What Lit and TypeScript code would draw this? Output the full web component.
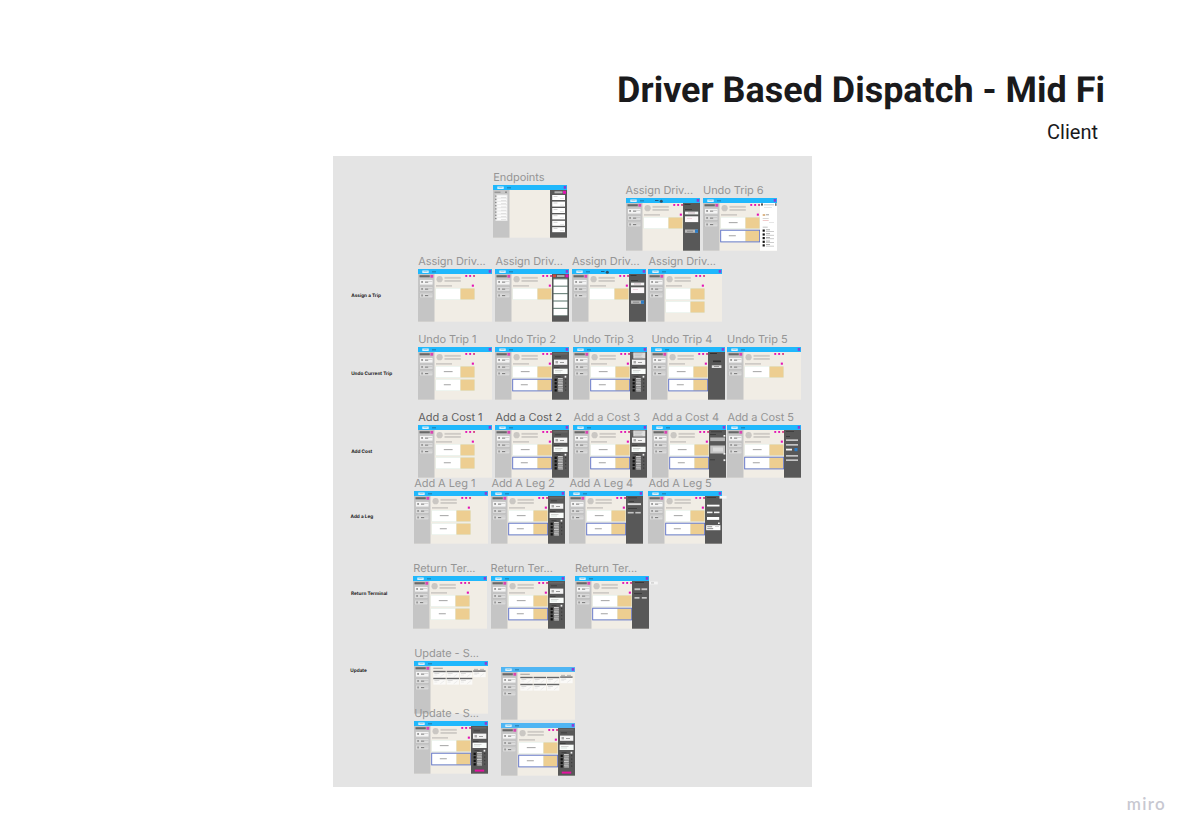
import { LitElement, html, svg, css, nothing } from 'lit';
import { customElement, property } from 'lit/decorators.js';
import { styleMap } from 'lit/directives/style-map.js';

type Box = [x: number, y: number, w: number, h: number, fill: string];

interface Frame {
  title?: string;
  x: number;
  y: number;
  cards?: number;
  selected?: boolean;
  labels?: boolean;
  panel?: string;
  bold?: boolean;
  kind?: string;
  nav?: string;
}

const DARK = '#585858';
const LIGHT = '#f4f4f4';
const GREY = '#c4c4c4';
const PINK = '#e412b5';
const BLUE = '#2e7cc4';

// driver card, trip card and the list of stops
const TRIP: Box[] = [
  [58.5, 6.5, 14, 0.8, '#777'],
  [60, 9.5, 6, 0.7, '#353535'],
  [59, 12.6, 13.3, 5.2, LIGHT],
  [60.5, 14, 2.5, 2.4, '#aaa'],
  [65, 15, 4, 0.8, '#888'],
  [59, 20, 5.5, 0.7, '#353535'],
  [58.6, 21.7, 14, 5.3, '#fafdfb'],
  [60, 23, 7.5, 0.6, '#bbb'],
  [60, 24.7, 6, 0.6, '#c8d8cf'],
  [60.5, 29.4, 5, 0.7, '#333'],
  [69.6, 28.8, 1.7, 1.8, LIGHT],
  ...[31.4, 34.9, 38.4, 41.9].flatMap((y): Box[] => [
    [59.6, y + 0.3, 2.2, 2.3, '#111'],
    [63, y - 0.4, 4.8, 1.3, '#c9c9c9'],
    [63.2, y + 1.2, 4.8, 1.6, '#aaa'],
    [70.3, y + 0.6, 0.9, 1.2, '#333'],
  ]),
];

const PANELS: Record<string, Box[]> = {
  endpoints: [
    [61.5, 6.3, 8, 2, '#b5b5b5'],
    [70, 5.8, 3, 3, PINK],
    ...[10, 16.6, 23, 29.4, 35.8, 42.2].flatMap((y): Box[] => [
      [59.2, y, 12.8, 5, '#fff'],
      [60.5, y + 1.1, 4, 0.6, '#bbb'],
      [67, y + 3.2, 4, 0.5, '#ccc'],
    ]),
  ],
  list: [
    [58, 5.6, 3, 2.6, '#d1463b'],
    [62, 6, 7.5, 2, '#aaa'],
    [70.5, 5.4, 3, 3, PINK],
    [58.5, 9.3, 14, 37.4, '#738a82'],
    ...[10.4, 17.8, 25.2, 32.6, 40].map((y): Box => [58.6, y, 13.7, 6.2, '#fff']),
  ],
  form: [
    [58.5, 6, 6, 0.8, '#333'],
    [59, 11.3, 7, 0.7, '#333'],
    [59, 13.6, 13.2, 2.8, LIGHT],
    [62, 14.6, 7, 0.7, '#bb9caa'],
    [59, 18.3, 13.2, 5.8, '#fcf8fa'],
    [61, 20, 5, 0.6, '#e9bfd1'],
    [59, 31.5, 13, 3.3, '#b9b9b9'],
    [61, 32.8, 6, 0.7, '#777'],
    [69, 31.5, 3, 3.3, BLUE],
  ],
  trip: TRIP,
  tripMenu: [
    ...TRIP,
    [60.3, 5.5, 12, 6, '#dedede'],
    [61.5, 6.7, 8, 0.6, '#aaa'],
    [61.5, 8.6, 7, 0.6, '#aaa'],
    [61.5, 10.3, 8, 0.6, '#bbb'],
  ],
  confirm: [
    [59, 6.3, 7, 0.7, '#222'],
    [62, 13.5, 8, 1.6, '#333'],
    [60.8, 18.3, 9.6, 2.7, '#dcdcdc'],
    [63, 19.3, 5, 0.7, '#777'],
  ],
  costList: [
    [59, 6.5, 11, 0.7, '#333'],
    [58, 9, 6, 0.7, '#333'],
    [58.2, 12.5, 14.8, 3.6, '#b5b5b5'],
    [71.5, 10, 1.8, 1.7, LIGHT],
    [58.2, 20.5, 14.8, 8, GREY],
    [61, 22.5, 10, 4, '#dcdcdc'],
    [71.5, 28, 1.8, 1.6, LIGHT],
    [58, 34.5, 5, 0.7, '#333'],
    [71.5, 34.3, 1.8, 1.8, LIGHT],
  ],
  costForm: [
    [59, 6.3, 8, 0.7, '#333'],
    [59, 11.3, 4, 0.7, '#333'],
    [59, 14.3, 12, 1.7, GREY],
    [59, 19, 12, 1.7, GREY],
    [59, 23.7, 6, 1.8, LIGHT],
    [67.5, 23, 3, 3.2, BLUE],
    [59, 30, 12, 1.7, GREY],
    [59, 34.3, 12, 1.7, GREY],
  ],
  legForm: [
    [59, 6.5, 9, 0.7, '#333'],
    [60, 10, 5, 0.7, '#333'],
    [58.7, 12.2, 13.3, 1.9, '#dadada'],
    [59, 17, 9, 0.7, '#333'],
    [58.7, 20.9, 6, 1.6, GREY],
    [66.3, 20.9, 5.5, 1.6, GREY],
  ],
  legSaved: [
    [59, 6.3, 9, 0.7, '#333'],
    [59, 13.7, 12.5, 1.8, '#fff'],
    [59, 20.6, 5.5, 1.6, LIGHT],
    [66, 20.6, 5.5, 1.6, LIGHT],
    [59, 26, 12.2, 2.9, '#fff'],
    [70, 31.5, 1.7, 1.5, LIGHT],
    [58.2, 34.2, 14.2, 5, '#fff'],
    [59.2, 35.4, 5, 0.8, '#777'],
    [59.2, 37.3, 6, 0.8, '#777'],
    [67, 35.4, 4, 0.6, '#bbb'],
    [71.5, 5, 7, 2.6, '#f7f7f7'],
  ],
  terminal: [
    [60, 6, 9, 0.8, '#333'],
    [59.5, 12.3, 5.7, 1.9, GREY],
    [66.5, 12.3, 5.7, 1.9, GREY],
    [59, 17.3, 8, 0.8, '#333'],
    [59.5, 21, 5, 1.7, GREY],
    [66.8, 21, 5, 1.7, GREY],
    [74.8, 5.6, 8, 2.8, '#f5f5f5'],
    [76, 6.6, 3, 0.7, '#aaa'],
  ],
  save: [...TRIP, [60.8, 48.6, 9.4, 2, '#e5129f']],
  profile: [
    [58, 5.4, 2, 2.2, '#555'],
    [61, 6.6, 10, 0.6, '#999'],
    [61, 9, 8, 0.5, '#ccc'],
    [59.7, 16, 2.5, 2, '#dcb78a'],
    [63, 16.5, 3, 0.7, '#777'],
    [59.7, 20, 6, 0.6, '#bbb'],
    [59.7, 22, 6, 0.6, '#e7a6a6'],
    [66, 24, 5, 0.5, '#ccc'],
    [59.7, 28.8, 5, 0.6, '#999'],
    [72, 5.2, 1.6, 2.6, '#777'],
    ...[31.5, 35.4, 39, 42.7, 46.3].flatMap((y): Box[] => [
      [59.6, y, 2.2, 2.2, '#161616'],
      [63, y, 4, 0.7, '#888'],
      [63, y + 1.5, 8, 0.6, '#aaa'],
    ]),
  ],
};

const FRAMES: Frame[] = [
  { title: 'Endpoints', x: 493.3, y: 185.3, kind: 'endpoints', panel: 'endpoints' },
  { title: 'Assign Driv...', x: 625.6, y: 198.4, cards: 1, panel: 'form' },
  { title: 'Undo Trip 6', x: 703, y: 198.4, cards: 2, labels: true, selected: true, panel: 'profile' },

  { title: 'Assign Driv...', x: 418.2, y: 269.3, cards: 1 },
  { title: 'Assign Driv...', x: 495.4, y: 269.3, cards: 1, panel: 'list' },
  { title: 'Assign Driv...', x: 572, y: 269.3, cards: 1, panel: 'form' },
  { title: 'Assign Driv...', x: 648.4, y: 269.3, cards: 2 },

  { title: 'Undo Trip 1', x: 418.2, y: 347, cards: 2, labels: true },
  { title: 'Undo Trip 2', x: 495.4, y: 347, cards: 2, labels: true, selected: true, panel: 'trip' },
  { title: 'Undo Trip 3', x: 573.1, y: 347, cards: 2, labels: true, selected: true, panel: 'tripMenu' },
  { title: 'Undo Trip 4', x: 651.4, y: 347, cards: 2, labels: true, selected: true, panel: 'confirm' },
  { title: 'Undo Trip 5', x: 727.1, y: 347, cards: 1, labels: true },

  { title: 'Add a Cost 1', x: 418.2, y: 425, cards: 2, labels: true, bold: true },
  { title: 'Add a Cost 2', x: 495.4, y: 425, cards: 2, labels: true, selected: true, panel: 'trip', bold: true },
  { title: 'Add a Cost 3', x: 573.4, y: 425, cards: 2, labels: true, selected: true, panel: 'tripMenu' },
  { title: 'Add a Cost 4', x: 652, y: 425, cards: 2, labels: true, selected: true, panel: 'costList' },
  { title: 'Add a Cost 5', x: 727.4, y: 425, cards: 2, labels: true, selected: true, panel: 'costForm' },

  { title: 'Add A Leg 1', x: 414.2, y: 491.2, cards: 2, labels: true },
  { title: 'Add A Leg 2', x: 491.4, y: 491.2, cards: 2, labels: true, selected: true, panel: 'trip' },
  { title: 'Add A Leg 4', x: 569.4, y: 491.2, cards: 2, labels: true, selected: true, panel: 'legForm' },
  { title: 'Add A Leg 5', x: 648.4, y: 491.2, cards: 2, labels: true, selected: true, panel: 'legSaved' },

  { title: 'Return Ter...', x: 413.3, y: 576, cards: 2, labels: true },
  { title: 'Return Ter...', x: 490.6, y: 576, cards: 2, labels: true, selected: true, panel: 'trip' },
  { title: 'Return Ter...', x: 575, y: 576, cards: 2, labels: true, selected: true, panel: 'terminal' },

  { title: 'Update - S...', x: 414.2, y: 661, kind: 'grid' },
  { x: 500.8, y: 667.3, kind: 'grid', nav: '#4fb5f3' },
  { title: 'Update - S...', x: 414.2, y: 721.3, cards: 2, labels: true, selected: true, panel: 'save' },
  { x: 500.8, y: 723.4, cards: 2, labels: true, selected: true, panel: 'save', nav: '#4fb5f3' },
];

const SECTIONS = [
  { text: 'Assign a Trip', x: 351.2, y: 293 },
  { text: 'Undo Current Trip', x: 351.2, y: 371 },
  { text: 'Add Cost', x: 351.2, y: 449 },
  { text: 'Add a Leg', x: 350.5, y: 513.6 },
  { text: 'Return Terminal', x: 351, y: 590.8 },
  { text: 'Update', x: 350.3, y: 668.4 },
];

// the board's own corner on the page, frames are stored in page units
const BOARD_X = 333;
const BOARD_Y = 156;

const rects = (boxes: Box[]) =>
  boxes.map(([x, y, w, h, fill]) => svg`<rect x=${x} y=${y} width=${w} height=${h} fill=${fill} />`);

@customElement('board-frame')
export class BoardFrame extends LitElement {
  @property({ attribute: false }) frame!: Frame;

  static styles = css`
    :host {
      display: flex;
      flex-direction: column;
      justify-content: flex-end;
      width: 74px;
      height: 69px;
    }

    .title {
      font: 400 11px/14px Inter, sans-serif;
      letter-spacing: -0.06px;
      text-rendering: geometricPrecision;
      color: #959595;
      white-space: nowrap;
    }

    .title.bold {
      color: #5f5f5f;
    }

    svg {
      display: block;
      overflow: visible;
      margin-top: 1px;
      flex: none;
    }
  `;

  sidebar() {
    if (this.frame.kind === 'endpoints') {
      return rects([
        [1.5, 6.7, 6, 1, '#888'],
        [12, 6.5, 2, 1.4, '#888'],
        [2.5, 9.5, 12, 26.5, '#e9e9e9'],
        ...[10.5, 13.7, 16.9, 20.1, 23.3, 26.5, 29.7, 32.9].flatMap((y): Box[] => [
          [2.2, y, 1.2, 1.2, '#777'],
          [4.2, y, 9.5, 2.1, '#fbfbfb'],
          [8, y + 1.6, 5, 0.5, '#ccc'],
        ]),
      ]);
    }
    return rects([
      [1.5, 6.2, 10.3, 2.1, '#686868'],
      [12.4, 5.9, 2.8, 2.8, '#d944b1'],
      ...[10.6, 17.6, 24.1].flatMap((y, i): Box[] => [
        [1.5, y, 13.5, i ? 4.9 : 5.3, '#b2b2b2'],
        [1.8, y + 0.2, 12.9, i ? 4.4 : 4.9, i ? '#dadada' : '#f4f4f4'],
        [3.2, y + 1.4, 1.8, 1.9, '#999'],
        [7, y + 2, 3.2, 1, '#777'],
        [10.2, y + 1.6, 4, 0.5, '#b8b8b8'],
      ]),
    ]);
  }

  grid() {
    const card = (x: number, y: number) => svg`
      ${rects([
        [x, y, 12.4, 6.8, '#fbfaf8'],
        [x, y, 12.4, 1.4, '#666'],
        [x + 1, y + 2.4, 5, 0.5, '#bbb'],
        [x + 1, y + 4, 3, 0.5, '#ddd'],
      ])}
      <path d="M${x + 7} ${y + 6}l4-3" stroke="#ddd" stroke-width="0.5" />
    `;
    return svg`
      ${rects([[19.3, 6.8, 9.5, 0.8, '#888']])}
      ${[19.3, 32.6, 45.9].map((x) => [card(x, 9.8), card(x, 16.8)])}
      ${card(59.2, 9.4)}
      ${rects([[60, 7.9, 4, 0.7, '#999'], [66, 7.9, 4, 0.7, '#999']])}
    `;
  }

  trips() {
    const { cards = 0, labels, selected, panel } = this.frame;
    return svg`
      <circle cx="21.6" cy="10.2" r="3.1" fill="#cac7c3" />
      ${rects([
        [26.5, 7.9, 16.3, 1.9, '#cfcbc6'],
        [26.5, 11, 16.3, 1.9, '#cfcbc6'],
        [18, 16, 16, 1.7, '#cfcbc6'],
        [47.3, 6, 1.9, 1.9, PINK],
        [51.2, 6, 1.9, 1.9, PINK],
        [55.1, 6, 1.9, 1.9, '#d94388'],
        [53.8, 15.6, 2.1, 2.1, PINK],
      ])}
      ${[19.5, 32.6].slice(0, cards).map((y, i) => svg`
        <rect x="17.7" y=${y - 0.3} width="39" height="11.5" fill="#d8eae0" />
        <rect x="18" y=${y} width="24.4" height="10.9" fill="#fff" />
        <rect x="42.5" y=${y} width="14" height="10.9" fill="#edce91" />
        ${labels ? svg`<rect x="25.8" y=${y + 4.8} width=${i ? 7 : 8.8} height="0.8" fill="#8e8e8e" />` : nothing}
        ${selected && i
          ? svg`<rect x="17.7" y=${y - 0.4} width="39" height="11.7" fill="none" stroke="#5d6fc9" stroke-width="0.9" />`
          : nothing}
      `)}
      ${panel === 'form'
        ? svg`<rect x="29" y="2.2" width="3.5" height="0.8" fill="#246"/>
            <circle cx="35.3" cy="3.2" r="1.5" fill="#315064" />`
        : nothing}
    `;
  }

  render() {
    const { title, bold, kind, panel, nav } = this.frame;
    return html`
      ${title ? html`<div class="title ${bold ? 'bold' : ''}">${title}</div>` : nothing}
      <svg width="74" height="53" viewBox="0 0 74 53">
        <rect width="74" height="52.7" fill="#f1ede5" />
        <rect y="4.8" width="16.5" height="47.9" fill="#c5c5c5" />
        <rect width="74" height="5" fill=${nav ?? '#20b8fc'} />
        ${rects([
          [4.3, 1.5, 6.4, 2.5, '#d8f2ff'],
          [5.5, 2.4, 4, 0.6, '#8dbbd0'],
          [14, 2.4, 4, 0.9, '#206f9a'],
        ])}
        ${this.sidebar()}
        ${kind === 'grid' ? this.grid() : kind ? nothing : this.trips()}
        ${panel
          ? svg`<rect x="57" y="5" width="17" height="47.7" fill=${panel === 'profile' ? '#fff' : DARK} />
              ${rects(PANELS[panel])}`
          : nothing}
        <rect x="70.7" y="1" width="2.5" height="2.8" fill="#8b3fd5" />
      </svg>
    `;
  }
}

@customElement('app-root')
export class AppRoot extends LitElement {
  static styles = css`
    :host {
      display: flex;
      flex-direction: column;
      box-sizing: border-box;
      width: 1192px;
      height: 838px;
      background: #fff;
      color: #1a1a1c;
      font-family: Roboto, sans-serif;
      overflow: hidden;
    }

    header {
      box-sizing: border-box;
      height: 156px;
      padding: 69px 87px 0 0;
      text-align: right;
    }

    h1 {
      margin: 0;
      font-size: 35.95px;
      line-height: 43px;
      font-weight: 700;
      text-rendering: geometricPrecision;
    }

    .subtitle {
      margin: 8px 7px 0 0;
      font-size: 20px;
      line-height: 24px;
    }

    .board {
      position: relative;
      width: 479px;
      height: 631px;
      margin-left: 333px;
      background: #e4e4e4;
    }

    board-frame,
    .section {
      position: absolute;
    }

    .section {
      font: 700 4.7px/7px Inter, sans-serif;
      text-rendering: geometricPrecision;
      color: #1c1c1c;
      white-space: nowrap;
    }

    footer {
      padding: 5px 26px 0 0;
      text-align: right;
      font: 600 17px/24px Lato, sans-serif;
      letter-spacing: 1.3px;
      color: #c8c8d1;
    }
  `;

  place(x: number, y: number) {
    return styleMap({ left: `${x - BOARD_X}px`, top: `${y - BOARD_Y}px` });
  }

  render() {
    return html`
      <header>
        <h1>Driver Based Dispatch - Mid Fi</h1>
        <div class="subtitle">Client</div>
      </header>
      <main class="board">
        ${FRAMES.map((f) => html`<board-frame .frame=${f} style=${this.place(f.x, f.y - 16)}></board-frame>`)}
        ${SECTIONS.map((s) => html`<div class="section" style=${this.place(s.x, s.y)}>${s.text}</div>`)}
      </main>
      <footer>miro</footer>
    `;
  }
}
